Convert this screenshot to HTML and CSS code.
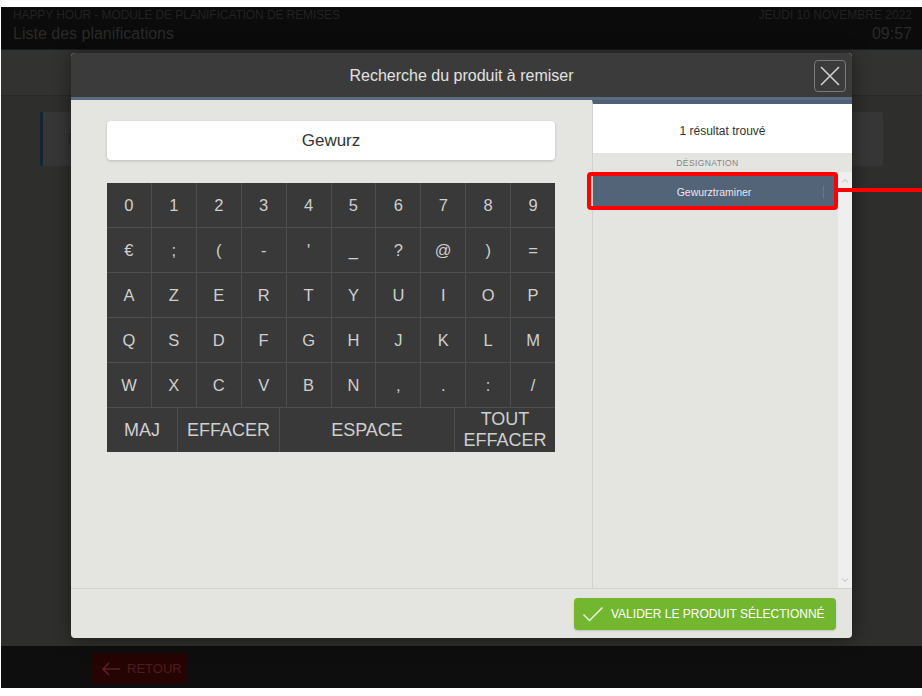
FILE: index.html
```html
<!DOCTYPE html>
<html lang="fr">
<head>
<meta charset="utf-8">
<title>Recherche du produit à remiser</title>
<link rel="stylesheet" href="styles.css">
</head>
<body>
<div class="screen">
  <header class="topbar">
    <div class="top-left">
      <div class="app-name">HAPPY HOUR - MODULE DE PLANIFICATION DE REMISES</div>
      <div class="page-name">Liste des planifications</div>
    </div>
    <div class="top-right">
      <div class="date">JEUDI 10 NOVEMBRE 2022</div>
      <div class="time">09:57</div>
    </div>
  </header>
  <div class="subbar"></div>
  <main class="content">
    <div class="card"><span class="card-i">i</span></div>
  </main>
  <footer class="bottombar">
    <div class="back-btn">
      <svg width="22" height="16" viewBox="0 0 22 16"><path d="M20 8H3M9 2L3 8l6 6" fill="none" stroke="#5a2222" stroke-width="1.6"/></svg>
      <span>RETOUR</span>
    </div>
  </footer>

  <div class="modal">
    <div class="modal-head">
      <div class="modal-title">Recherche du produit à remiser</div>
      <div class="close-btn">
        <svg width="22" height="22" viewBox="0 0 22 22"><path d="M2 2L20 20M20 2L2 20" stroke="#d0d0d0" stroke-width="1.6"/></svg>
      </div>
    </div>
    <div class="modal-body">
      <div class="left-pane">
        <div class="search-box">Gewurz</div>
        <div class="keyboard">
          <div class="keys">
            <div class="key">0</div><div class="key">1</div><div class="key">2</div><div class="key">3</div><div class="key">4</div><div class="key">5</div><div class="key">6</div><div class="key">7</div><div class="key">8</div><div class="key">9</div>
            <div class="key">€</div><div class="key">;</div><div class="key">(</div><div class="key">-</div><div class="key">'</div><div class="key">_</div><div class="key">?</div><div class="key">@</div><div class="key">)</div><div class="key">=</div>
            <div class="key">A</div><div class="key">Z</div><div class="key">E</div><div class="key">R</div><div class="key">T</div><div class="key">Y</div><div class="key">U</div><div class="key">I</div><div class="key">O</div><div class="key">P</div>
            <div class="key">Q</div><div class="key">S</div><div class="key">D</div><div class="key">F</div><div class="key">G</div><div class="key">H</div><div class="key">J</div><div class="key">K</div><div class="key">L</div><div class="key">M</div>
            <div class="key">W</div><div class="key">X</div><div class="key">C</div><div class="key">V</div><div class="key">B</div><div class="key">N</div><div class="key">,</div><div class="key">.</div><div class="key">:</div><div class="key">/</div>
          </div>
          <div class="keys-last">
            <div class="key">MAJ</div>
            <div class="key">EFFACER</div>
            <div class="key">ESPACE</div>
            <div class="key key-two">TOUT<br>EFFACER</div>
          </div>
        </div>
      </div>
      <div class="right-pane">
        <div class="result-head">1 résultat trouvé</div>
        <div class="col-label">DÉSIGNATION</div>
        <div class="list-wrap">
          <div class="list">
            <div class="row-selected">Gewurztraminer<span class="row-div"></span></div>
          </div>
          <div class="scrollbar">
            <svg width="8" height="5" viewBox="0 0 8 5"><path d="M1 4.5L4 1.5L7 4.5" fill="none" stroke="#b8b8b8" stroke-width="1"/></svg>
            <svg width="8" height="5" viewBox="0 0 8 5"><path d="M1 0.5L4 3.5L7 0.5" fill="none" stroke="#b8b8b8" stroke-width="1"/></svg>
          </div>
        </div>
      </div>
    </div>
    <div class="modal-foot">
      <div class="validate-btn">
        <svg width="22" height="16" viewBox="0 0 22 16"><path d="M1.5 8.5L7.5 14.5L20.5 1.5" fill="none" stroke="#e8f5dc" stroke-width="1.5"/></svg>
        <span>VALIDER LE PRODUIT SÉLECTIONNÉ</span>
      </div>
    </div>
  </div>

  <div class="annot-box"></div>
  <div class="annot-line"></div>
</div>
</body>
</html>
```

FILE: styles.css
```css
* { box-sizing: border-box; }
html, body { margin: 0; padding: 0; background: #ffffff; }
body { font-family: "Liberation Sans", Arial, sans-serif; }

.screen {
  position: relative;
  margin: 7px 0 0 1px;
  width: 921px;
  height: 681px;
  display: flex;
  flex-direction: column;
  background: #2e2e2d;
  overflow: hidden;
}

.topbar {
  height: 43px;
  background: #0b0b0b;
  border-bottom: 1px solid #161c26;
  display: flex;
  justify-content: space-between;
  padding: 0 10px 0 12px;
}
.top-left, .top-right { display: flex; flex-direction: column; }
.top-right { align-items: flex-end; }
.app-name { font-size: 12px; color: #222222; margin-top: 1px; letter-spacing: -0.1px; }
.page-name { font-size: 16px; color: #2a2a2a; margin-top: 3px; }
.date { font-size: 12px; color: #222222; margin-top: 1px; }
.time { font-size: 16px; color: #2a2a2a; margin-top: 3px; }

.subbar {
  height: 46px;
  background: #323231;
  border-bottom: 1px solid #282827;
}

.content {
  flex: 1;
  padding: 16px 39px 0 39px;
}
.card {
  height: 54px;
  background: #363636;
  border-left: 3px solid #0e2733;
  border-radius: 2px;
  padding: 14px 0 0 24px;
}
.card-i { color: #2a2a2a; font-size: 20px; }

.bottombar {
  height: 42px;
  background: #0e0e0e;
  padding: 7px 0 0 91px;
}
.back-btn {
  width: 95px;
  height: 31px;
  background: #270404;
  border-radius: 4px;
  display: flex;
  align-items: center;
  gap: 5px;
  padding-left: 8px;
  color: #4d1c1c;
  font-size: 13px;
}

/* modal */
.modal {
  position: absolute;
  left: 70px;
  top: 46px;
  width: 781px;
  height: 585px;
  background: #e4e4e0;
  border-radius: 4px;
  display: flex;
  flex-direction: column;
  box-shadow: 0 0 18px rgba(0,0,0,0.45);
  overflow: hidden;
}
.modal-head {
  height: 47px;
  background: #3b3b3b;
  border-bottom: 3px solid #5a6a7f;
  display: flex;
  align-items: center;
  justify-content: center;
  position: relative;
}
.modal-title { color: #e2e2e2; font-size: 16px; margin-top: 1px; }
.close-btn {
  position: absolute;
  right: 6px;
  top: 7px;
  width: 32px;
  height: 32px;
  border: 1.5px solid #7a7a7a;
  border-radius: 4px;
  display: flex;
  align-items: center;
  justify-content: center;
}

.modal-body {
  flex: 1;
  display: flex;
}
.left-pane {
  width: 521px;
  padding: 21px 0 0 36px;
}
.search-box {
  width: 448px;
  height: 39px;
  background: #ffffff;
  border-radius: 4px;
  box-shadow: 0 1px 3px rgba(0,0,0,0.18);
  display: flex;
  align-items: center;
  justify-content: center;
  font-size: 17px;
  color: #333333;
}
.keyboard {
  margin-top: 23px;
  width: 448px;
  background: #4e4e4e;
  display: flex;
  flex-direction: column;
  gap: 1px;
}
.keys {
  display: grid;
  grid-template-columns: repeat(10, 1fr);
  grid-auto-rows: 44px;
  gap: 1px;
}
.keys-last {
  display: grid;
  grid-template-columns: 70px 101px 174px 1fr;
  grid-auto-rows: 44px;
  gap: 1px;
}
.key {
  background: #393939;
  color: #cfcfcf;
  font-size: 16.5px;
  display: flex;
  align-items: center;
  justify-content: center;
  text-align: center;
}
.keys-last .key { font-size: 18px; }
.key-two { line-height: 21px; }

.right-pane {
  width: 260px;
  border-left: 1px solid #d2d2ce;
  border-top: 4px solid #4f5f75;
  display: flex;
  flex-direction: column;
}
.result-head {
  height: 49px;
  background: #ffffff;
  display: flex;
  align-items: center;
  justify-content: center;
  font-size: 12px;
  color: #333333;
  padding-top: 4px;
}
.col-label {
  height: 19px;
  font-size: 8.5px;
  color: #858585;
  letter-spacing: 0.4px;
  display: flex;
  align-items: center;
  justify-content: center;
  padding-right: 30px;
  padding-top: 1px;
}
.list-wrap {
  flex: 1;
  display: flex;
}
.list {
  flex: 1;
  padding: 4px 3px 0 0;
}
.row-selected {
  position: relative;
  height: 31px;
  background: #536378;
  color: #e6e8ec;
  font-size: 10.5px;
  display: flex;
  align-items: center;
  justify-content: center;
}
.row-div {
  position: absolute;
  right: 11px;
  top: 9px;
  width: 1px;
  height: 14px;
  background: #66768a;
}
.scrollbar {
  width: 14px;
  background: #efefef;
  display: flex;
  flex-direction: column;
  justify-content: space-between;
  align-items: center;
  padding: 6px 0 5px;
}

.modal-foot {
  height: 50px;
  border-top: 1px solid #d2d2ce;
  display: flex;
  justify-content: flex-end;
  align-items: flex-start;
  padding: 9px 16px 0 0;
}
.validate-btn {
  width: 262px;
  height: 32px;
  background: #73b62f;
  border-radius: 4px;
  display: flex;
  align-items: center;
  gap: 7px;
  padding-left: 8px;
  color: #ffffff;
  font-size: 12px;
  box-shadow: 0 1px 2px rgba(0,0,0,0.15);
}

/* annotation overlay */
.annot-box {
  position: absolute;
  left: 586px;
  top: 165px;
  width: 251px;
  height: 38px;
  border: 4px solid #ff0000;
  border-radius: 4px;
}
.annot-line {
  position: absolute;
  left: 836px;
  top: 181px;
  width: 90px;
  height: 4px;
  background: #ff0000;
}
```
